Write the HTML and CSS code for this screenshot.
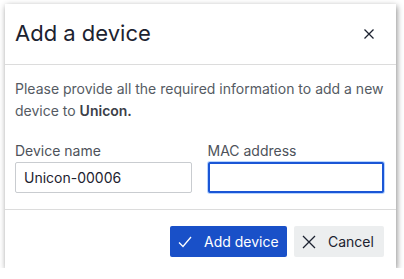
FILE: index.html
```html
<!DOCTYPE html>
<html>
<head>
  <title>Add a device</title>
  <meta name="viewport" content="width=device-width, initial-scale=1">
  <link rel="stylesheet" href="styles.css">
</head>
<body>
  <div class="dialog">
    <div class="dialog-header">
      <h2>Add a device</h2>
      <button type="button" class="close" aria-label="Close">
        <svg width="10" height="10" viewBox="0 0 10 10"><path d="M0.5 0.5L9.5 9.5M9.5 0.5L0.5 9.5" stroke="#1c2230" stroke-width="1.3" fill="none"/></svg>
      </button>
    </div>

    <div class="dialog-body">
      <p class="intro">Please provide all the required information to add a new device to <b>Unicon.</b></p>
      <div class="fields">
        <div class="form-group">
          <label for="name">Device name</label>
          <input type="text" id="name" value="Unicon-00006">
        </div>
        <div class="form-group">
          <label for="mac">MAC address</label>
          <input type="text" id="mac" class="focused">
        </div>
      </div>
    </div>

    <div class="dialog-footer">
      <button type="button" class="button primary">
        <svg width="14" height="12" viewBox="0 0 14 12"><path d="M1 6.5L5 10.5L13 1" stroke="#fff" stroke-width="1.3" fill="none"/></svg>
        Add device
      </button>
      <button type="button" class="button secondary">
        <svg width="14" height="14" viewBox="0 0 14 14"><path d="M1 1L13 13M13 1L1 13" stroke="#1c2230" stroke-width="1.3" fill="none"/></svg>
        Cancel
      </button>
    </div>
  </div>
</body>
</html>
```

FILE: styles.css
```css
body {
  margin: 0;
  padding: 4px 0 0 5px;
  background: #fff;
  font-family: Inter, "Noto Sans", sans-serif;
}
.dialog {
  width: 391px;
  height: 264px;
  background: #fff;
  box-shadow: 1px 2px 6px rgba(0,0,0,0.45);
  display: flex;
  flex-direction: column;
}
.dialog-header {
  height: 60px;
  display: flex;
  align-items: center;
  justify-content: space-between;
  padding: 0 22px 0 10px;
  border-bottom: 1px solid #dcdcdc;
}
h2 {
  margin: 0;
  font-size: 22px;
  font-weight: 400;
  color: #1c2230;
  padding-bottom: 2px;
}
.close {
  border: none;
  background: none;
  padding: 0;
  width: 10px;
  height: 10px;
  display: flex;
}
.close svg,
.button svg {
  flex-shrink: 0;
}
.dialog-body {
  padding: 13px 12px 0 10px;
  height: 131px;
  border-bottom: 1px solid #dcdcdc;
}
.intro {
  margin: 0 0 20px;
  font-size: 14px;
  line-height: 22px;
  color: #555b63;
}
.intro b {
  color: #3c4048;
  font-weight: 600;
}
.fields {
  display: flex;
  gap: 16px;
}
.form-group {
  flex: 1;
  min-width: 0;
  display: flex;
  flex-direction: column;
}
label {
  font-size: 14px;
  color: #4d525a;
  line-height: 17px;
  margin-bottom: 3px;
}
input[type="text"] {
  width: 100%;
  height: 31px;
  box-sizing: border-box;
  border: 1px solid #c9ccd0;
  border-radius: 2px;
  padding: 0 8px;
  font-family: inherit;
  font-size: 14px;
  color: #1c2230;
  outline: none;
}
input.focused {
  border: 2px solid #1a56d6;
  box-shadow: 0 0 0 1px #b7d4ff;
}
.dialog-footer {
  flex: 1;
  display: flex;
  justify-content: flex-end;
  align-items: flex-start;
  gap: 7px;
  padding: 16px 12px 0 0;
}
.button {
  height: 31px;
  border: none;
  border-radius: 2px;
  font-family: inherit;
  font-size: 14px;
  white-space: nowrap;
  display: flex;
  align-items: center;
  gap: 12px;
  padding: 0 8px;
}
.primary {
  background: #1950c8;
  color: #fff;
  width: 117px;
}
.secondary {
  background: #eceeef;
  color: #1c2230;
  width: 90px;
}
```
